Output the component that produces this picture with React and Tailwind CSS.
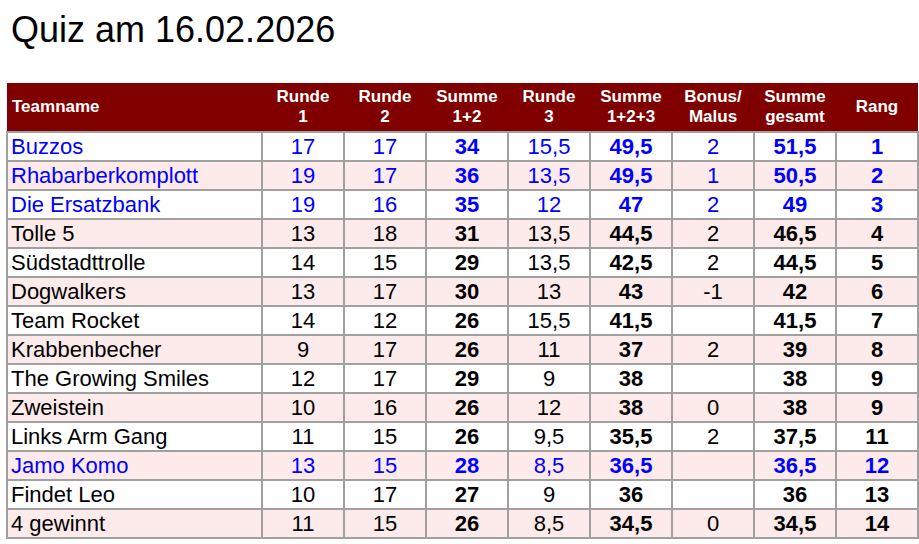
import React from "react";

const teams = [
  { name: "Buzzos", r1: "17", r2: "17", s12: "34", r3: "15,5", s123: "49,5", bonus: "2", total: "51,5", rang: "1", blue: true },
  { name: "Rhabarberkomplott", r1: "19", r2: "17", s12: "36", r3: "13,5", s123: "49,5", bonus: "1", total: "50,5", rang: "2", blue: true },
  { name: "Die Ersatzbank", r1: "19", r2: "16", s12: "35", r3: "12", s123: "47", bonus: "2", total: "49", rang: "3", blue: true },
  { name: "Tolle 5", r1: "13", r2: "18", s12: "31", r3: "13,5", s123: "44,5", bonus: "2", total: "46,5", rang: "4" },
  { name: "Südstadttrolle", r1: "14", r2: "15", s12: "29", r3: "13,5", s123: "42,5", bonus: "2", total: "44,5", rang: "5" },
  { name: "Dogwalkers", r1: "13", r2: "17", s12: "30", r3: "13", s123: "43", bonus: "-1", total: "42", rang: "6" },
  { name: "Team Rocket", r1: "14", r2: "12", s12: "26", r3: "15,5", s123: "41,5", bonus: "", total: "41,5", rang: "7" },
  { name: "Krabbenbecher", r1: "9", r2: "17", s12: "26", r3: "11", s123: "37", bonus: "2", total: "39", rang: "8" },
  { name: "The Growing Smiles", r1: "12", r2: "17", s12: "29", r3: "9", s123: "38", bonus: "", total: "38", rang: "9" },
  { name: "Zweistein", r1: "10", r2: "16", s12: "26", r3: "12", s123: "38", bonus: "0", total: "38", rang: "9" },
  { name: "Links Arm Gang", r1: "11", r2: "15", s12: "26", r3: "9,5", s123: "35,5", bonus: "2", total: "37,5", rang: "11" },
  { name: "Jamo Komo", r1: "13", r2: "15", s12: "28", r3: "8,5", s123: "36,5", bonus: "", total: "36,5", rang: "12", blue: true },
  { name: "Findet Leo", r1: "10", r2: "17", s12: "27", r3: "9", s123: "36", bonus: "", total: "36", rang: "13" },
  { name: "4 gewinnt", r1: "11", r2: "15", s12: "26", r3: "8,5", s123: "34,5", bonus: "0", total: "34,5", rang: "14" },
];

const headers = [
  ["Runde", "1"],
  ["Runde", "2"],
  ["Summe", "1+2"],
  ["Runde", "3"],
  ["Summe", "1+2+3"],
  ["Bonus/", "Malus"],
  ["Summe", "gesamt"],
  ["Rang"],
];

function App() {
  return (
    <div className="min-h-screen bg-white text-black" style={{ fontFamily: '"Liberation Sans", Arial, sans-serif' }}>
      <h1 className="pl-[11px] pt-[10px] text-[36px] leading-[40px] font-normal">Quiz am 16.02.2026</h1>

      <div className="mt-[33px] pl-[6px]">
        <table className="table-fixed border-collapse w-[911px]">
          <colgroup>
            <col className="w-[255px]" />
            {headers.map((_, i) => (
              <col key={i} className="w-[82px]" />
            ))}
          </colgroup>
          <thead>
            <tr className="bg-[#800000] text-white text-[17px] font-bold leading-[20px]">
              <th className="h-[49px] pl-[5px] text-left align-middle font-bold">Teamname</th>
              {headers.map((h, i) => (
                <th key={i} className="h-[49px] text-center align-middle font-bold">
                  {h.map((line, j) => (
                    <div key={j}>{line}</div>
                  ))}
                </th>
              ))}
            </tr>
          </thead>
          <tbody className="text-[22px] leading-[27px]">
            {teams.map((t, i) => {
              const bg = i % 2 === 1 ? "bg-[#fdeaea]" : "bg-white";
              const color = t.blue ? "text-[#0000ff]" : "text-black";
              const cell = "border-2 border-[#a0a0a0] p-0 text-center";
              return (
                <tr key={t.name} className={`${bg} ${color}`}>
                  <td className="border-2 border-[#a0a0a0] py-0 pl-[3px] text-left">{t.name}</td>
                  <td className={cell}>{t.r1}</td>
                  <td className={cell}>{t.r2}</td>
                  <td className={`${cell} font-bold`}>{t.s12}</td>
                  <td className={cell}>{t.r3}</td>
                  <td className={`${cell} font-bold`}>{t.s123}</td>
                  <td className={cell}>{t.bonus}</td>
                  <td className={`${cell} font-bold`}>{t.total}</td>
                  <td className={`${cell} font-bold`}>{t.rang}</td>
                </tr>
              );
            })}
          </tbody>
        </table>
      </div>
    </div>
  );
}

export default App;
